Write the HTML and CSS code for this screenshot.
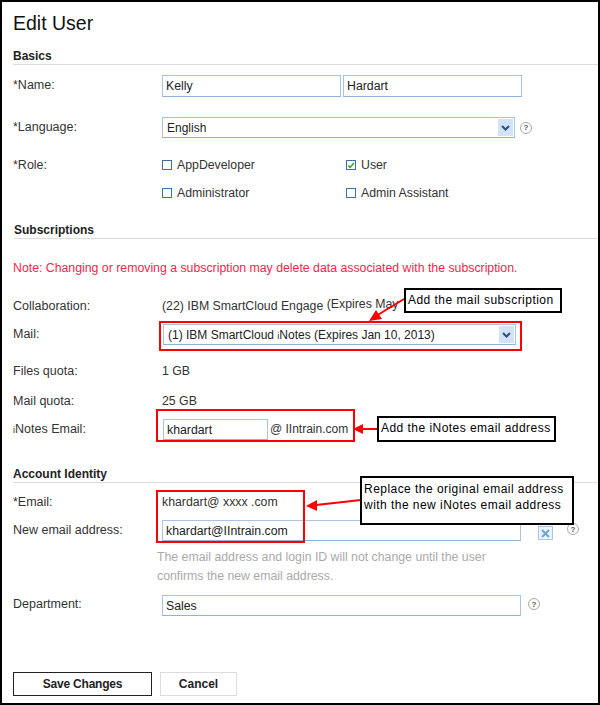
FILE: index.html
```html
<!DOCTYPE html>
<html lang="en">
<head>
    <meta charset="UTF-8">
    <title>Edit User</title>
    <link rel="stylesheet" href="styles.css">
</head>
<body>
    <div class="page">
        <h1>Edit User</h1>

        <h2 class="section-first">Basics</h2>
        <div class="row row-name">
            <label>*Name:</label>
            <div class="fields">
                <input class="text name-input" type="text" value="Kelly">
                <input class="text name-input" type="text" value="Hardart">
            </div>
        </div>
        <div class="row row-language">
            <label>*Language:</label>
            <div class="fields">
                <div class="select language-select">
                    <span>English</span>
                    <span class="select-arrow"><svg width="9" height="6" viewBox="0 0 9 6"><path d="M1 1l3.5 3.5L8 1" fill="none" stroke="#2f4f80" stroke-width="2"/></svg></span>
                </div>
                <span class="help">?</span>
            </div>
        </div>
        <div class="row row-role">
            <label>*Role:</label>
            <div class="roles">
                <div class="role"><span class="check"></span>AppDeveloper</div>
                <div class="role"><span class="check"><svg width="9" height="9" viewBox="0 0 9 9"><path d="M1.5 4.5l2 2.2L7.8 1.8" fill="none" stroke="#2aa52a" stroke-width="1.7"/></svg></span>User</div>
                <div class="role"><span class="check"></span>Administrator</div>
                <div class="role"><span class="check"></span>Admin Assistant</div>
            </div>
        </div>

        <h2 class="section-subs">Subscriptions</h2>
        <p class="note">Note: Changing or removing a subscription may delete data associated with the subscription.</p>
        <div class="row row-collab">
            <label>Collaboration:</label>
            <div>(22) IBM SmartCloud Engage <span class="expires">(Expires May 7, 2013)</span></div>
        </div>
        <div class="row row-mail">
            <label>Mail:</label>
            <div class="select mail-select">
                <span>(1) IBM SmartCloud <span class="small-i">i</span>Notes (Expires Jan 10, 2013)</span>
                <span class="select-arrow"><svg width="9" height="6" viewBox="0 0 9 6"><path d="M1 1l3.5 3.5L8 1" fill="none" stroke="#2f4f80" stroke-width="2"/></svg></span>
            </div>
        </div>
        <div class="row row-files">
            <label>Files quota:</label>
            <div>1 GB</div>
        </div>
        <div class="row row-quota">
            <label>Mail quota:</label>
            <div>25 GB</div>
        </div>
        <div class="row row-inotes">
            <label><span class="small-i">i</span>Notes Email:</label>
            <div class="fields">
                <input class="text inotes-input" type="text" value="khardart">
                <span class="domain">@ IIntrain.com</span>
            </div>
        </div>

        <h2 class="section-account">Account Identity</h2>
        <div class="row row-email">
            <label>*Email:</label>
            <div>khardart@ xxxx .com</div>
        </div>
        <div class="row row-new">
            <label>New email address:</label>
            <div class="fields">
                <input class="text wide-input" type="text" value="khardart@IIntrain.com">
                <span class="clear"><svg width="9" height="9" viewBox="0 0 9 9"><path d="M1 1l7 7M8 1l-7 7" stroke="#6aa5e0" stroke-width="2"/></svg></span>
                <span class="help help-new">?</span>
            </div>
        </div>
        <p class="hint">The email address and login ID will not change until the user<br>confirms the new email address.</p>
        <div class="row row-dept">
            <label>Department:</label>
            <div class="fields">
                <input class="text wide-input" type="text" value="Sales">
                <span class="help help-dept">?</span>
            </div>
        </div>

        <div class="buttons">
            <button class="btn btn-save">Save Changes</button>
            <button class="btn btn-cancel">Cancel</button>
        </div>

        <!-- callouts drawn on top of the form -->
        <div class="red-box box-mail"></div>
        <div class="red-box box-inotes"></div>
        <div class="red-box box-email"></div>
        <svg class="arrows" width="600" height="705" viewBox="0 0 600 705">
            <path d="M404 299L376 316" stroke="#f00" stroke-width="2"/>
            <path d="M369 321L382 319L376 310Z" fill="#f00"/>
            <path d="M377 429H362" stroke="#f00" stroke-width="2"/>
            <path d="M353 429L363 424V434Z" fill="#f00"/>
            <path d="M361 500L316 505" stroke="#f00" stroke-width="2"/>
            <path d="M306 506L317 500V511Z" fill="#f00"/>
        </svg>
        <div class="callout callout-mail">Add the mail subscription</div>
        <div class="callout callout-inotes">Add the iNotes email address</div>
        <div class="callout callout-replace">Replace the original email address<br>with the new iNotes email address</div>
    </div>
</body>
</html>
```
FILE: styles.css
```css
* {
    box-sizing: border-box;
}
body {
    margin: 0;
}
.page {
    position: relative;
    width: 600px;
    height: 705px;
    padding: 9px 11px 0 11px;
    border: 2px solid #000;
    background: #fff;
    font-family: "Liberation Sans", Arial, sans-serif;
    font-size: 12.3px;
    color: #333;
    overflow: hidden;
}
h1 {
    margin: 0;
    font-size: 19.5px;
    line-height: 24px;
    font-weight: normal;
    color: #111;
}
h2 {
    margin: 0 -11px 0 0;
    height: 18px;
    font-size: 12px;
    line-height: 18px;
    font-weight: bold;
    color: #222;
    border-bottom: 1px solid #ddd;
}
.section-first {
    margin-top: 12px;
}
.section-subs {
    margin-left: 1px;
}
.row {
    display: grid;
    grid-template-columns: 149px 1fr;
    align-items: center;
}
.row label {
    margin-top: -3px;
    font-size: 12.5px;
    color: #333;
}
.fields {
    display: flex;
    align-items: center;
}
.text {
    height: 21px;
    padding: 0 3px;
    border: 1px solid #a9c4e0;
    border-bottom-color: #8fb2d6;
    font-family: inherit;
    font-size: 12.3px;
    color: #222;
    background: #fff;
}
.name-input {
    width: 179px;
    height: 22px;
    margin-right: 2px;
}
.select {
    display: flex;
    align-items: center;
    justify-content: space-between;
    height: 21px;
    padding: 0 1px 0 4px;
    border: 1px solid #a9c4e0;
    border-bottom-color: #8fb2d6;
    font-size: 12px;
    color: #222;
}
.language-select {
    width: 353px;
}
.mail-select {
    width: 353px;
    margin-left: 1px;
}
.select-arrow {
    display: flex;
    align-items: center;
    justify-content: center;
    width: 15px;
    height: 17px;
    background: #d3e3f6;
}
.help {
    display: flex;
    align-items: center;
    justify-content: center;
    width: 12px;
    height: 12px;
    margin-left: 5px;
    border: 1px solid #aaa;
    border-radius: 50%;
    font-size: 8px;
    font-weight: bold;
    color: #555;
}
.help-new {
    margin-left: 14px;
    margin-top: -3px;
}
.help-dept {
    margin-left: 7px;
    margin-top: -3px;
}
.row-name {
    height: 22px;
    margin-top: 10px;
}
.row-language {
    height: 21px;
    margin-top: 20px;
}
.row-language label,
.row-mail label,
.row-new label {
    margin-top: -1px;
}
.row-role {
    align-items: start;
    height: 42px;
    margin-top: 20px;
    margin-bottom: 21px;
}
.row-role label {
    margin-top: 0;
}
.roles {
    display: grid;
    grid-template-columns: 184px 1fr;
    row-gap: 14px;
}
.role {
    display: flex;
    align-items: center;
    height: 14px;
}
.check {
    display: flex;
    align-items: center;
    justify-content: center;
    width: 10px;
    height: 10px;
    margin-right: 5px;
    border: 1px solid #3f6f9f;
}
.note {
    margin: 22px 0 0 0;
    height: 14px;
    line-height: 14px;
    color: #f0284a;
}
.row-collab {
    height: 14px;
    margin-top: 24px;
}
.row-collab label {
    margin-top: 0;
}
.expires {
    position: relative;
    top: -2px;
}
.small-i {
    font-size: 9px;
}
.row-mail {
    height: 21px;
    margin-top: 11px;
}
.row-files {
    height: 14px;
    margin-top: 19px;
}
.row-files label,
.row-quota label,
.row-email label {
    margin-top: 0;
}
.row-quota {
    height: 14px;
    margin-top: 16px;
}
.row-inotes {
    height: 21px;
    margin-top: 11px;
    margin-bottom: 25px;
}
.row-inotes label {
    margin-top: -2px;
}
.inotes-input {
    width: 105px;
    margin-left: 1px;
}
.domain {
    margin-left: 2px;
    margin-top: -2px;
    font-size: 12px;
}
.row-email {
    height: 14px;
    margin-top: 12px;
}
.row-new {
    height: 21px;
    margin-top: 11px;
}
.wide-input {
    width: 359px;
}
.clear {
    display: flex;
    align-items: center;
    justify-content: center;
    width: 15px;
    height: 14px;
    margin-left: 17px;
    margin-top: 5px;
    border: 1px solid #a9c4e0;
    background: #eef4fb;
}
.hint {
    margin: 7px 0 0 144px;
    line-height: 19px;
    color: #aaa;
}
.row-dept {
    height: 21px;
    margin-top: 9px;
}
.buttons {
    display: flex;
    gap: 8px;
    margin-top: 56px;
}
.btn {
    height: 24px;
    padding-bottom: 2px;
    font-family: inherit;
    font-size: 12px;
    font-weight: bold;
    color: #222;
    background: #fff;
}
.btn-save {
    width: 139px;
    border: 1px solid #222;
    letter-spacing: -0.2px;
}
.btn-cancel {
    width: 77px;
    border: 1px solid #ddd;
}
.red-box {
    position: absolute;
    border: 2px solid #f00;
}
.box-mail {
    left: 157px;
    top: 319px;
    width: 363px;
    height: 30px;
}
.box-inotes {
    left: 154px;
    top: 407px;
    width: 199px;
    height: 33px;
}
.box-email {
    left: 154px;
    top: 488px;
    width: 149px;
    height: 53px;
}
.arrows {
    position: absolute;
    left: -2px;
    top: -2px;
}
.callout {
    position: absolute;
    padding: 0 2px;
    border: 2px solid #000;
    background: #fff;
    font-size: 12px;
    line-height: 16px;
    color: #000;
    letter-spacing: 0.46px;
}
.callout-mail {
    left: 402px;
    top: 286px;
    width: 158px;
    height: 25px;
    padding-top: 2px;
}
.callout-inotes {
    left: 375px;
    top: 414px;
    width: 179px;
    height: 26px;
    padding-top: 2px;
}
.callout-replace {
    left: 358px;
    top: 474px;
    width: 214px;
    height: 49px;
    padding-top: 3px;
}
```
